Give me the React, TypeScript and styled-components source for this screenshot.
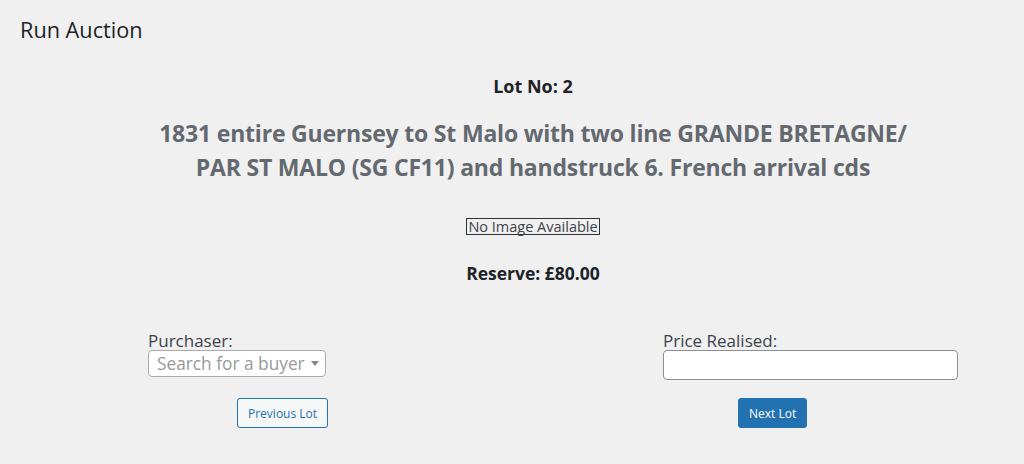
import React, {FC} from 'react';
import styled, {createGlobalStyle} from 'styled-components';

const GlobalStyle = createGlobalStyle`
  html, body {
    margin: 0;
    padding: 0;
    background: #f0f0f1;
    font-family: "Open Sans", "Noto Sans", sans-serif;
    color: #3c434a;
  }
`;

const App: FC = (): JSX.Element => {
    return (
        <>
            <GlobalStyle/>
            <Wrap>
                <PageTitle>Run Auction</PageTitle>
                <Lot>
                    <LotNo>Lot No: 2</LotNo>
                    <LotTitle>
                        1831 entire Guernsey to St Malo with two line GRANDE BRETAGNE/<br/>
                        PAR ST MALO (SG CF11) and handstruck 6. French arrival cds
                    </LotTitle>
                    <NoImage>No Image Available</NoImage>
                    <Reserve>Reserve: £80.00</Reserve>
                </Lot>
                <Form>
                    <Field>
                        <Label htmlFor="buyer">Purchaser:</Label>
                        <Select id="buyer">
                            <Placeholder>Search for a buyer</Placeholder>
                            <Arrow/>
                        </Select>
                    </Field>
                    <Field>
                        <Label htmlFor="price">Price Realised:</Label>
                        <Input id="price" type="text"/>
                    </Field>
                    <ButtonCell $offset={89}>
                        <Button>Previous Lot</Button>
                    </ButtonCell>
                    <ButtonCell $offset={75}>
                        <Button $primary>Next Lot</Button>
                    </ButtonCell>
                </Form>
            </Wrap>
        </>
    );
};

export default App;

const Wrap = styled.div`
  padding: 16px 0 0 20px;
`;

const PageTitle = styled.h1`
  margin: 0;
  font-size: 21.7px;
  font-weight: 400;
  line-height: 28px;
  color: #1d2327;
`;

const Lot = styled.div`
  padding-left: 22px;
  display: flex;
  flex-direction: column;
  align-items: center;
  text-align: center;
`;

const LotNo = styled.div`
  margin-top: 30px;
  font-size: 18px;
  font-weight: 700;
  line-height: 24px;
  color: #1d2327;
`;

const LotTitle = styled.h2`
  margin: 18px 0 0;
  font-size: 23px;
  font-weight: 700;
  line-height: 34px;
  letter-spacing: -0.2px;
  color: #646970;
`;

const NoImage = styled.div`
  margin-top: 34px;
  border: 1px solid #2c3338;
  padding: 0 1px;
  font-size: 14.5px;
  line-height: 15px;
  color: #3c434a;
`;

const Reserve = styled.div`
  margin-top: 26px;
  font-size: 17.5px;
  font-weight: 700;
  line-height: 24px;
  color: #1d2327;
`;

const Form = styled.div`
  margin-top: 47px;
  padding-left: 128px;
  display: grid;
  grid-template-columns: 515px 1fr;
  row-gap: 18px;
`;

const Field = styled.div`
  display: flex;
  flex-direction: column;
  align-items: flex-start;
`;

const Label = styled.label`
  font-size: 17px;
  line-height: 18px;
  color: #3c434a;
`;

const Select = styled.div`
  box-sizing: border-box;
  width: 178px;
  height: 27px;
  padding: 0 6px 0 8px;
  display: flex;
  align-items: center;
  justify-content: space-between;
  background: #fff;
  border: 1px solid #aaa;
  border-radius: 4px;
`;

const Placeholder = styled.span`
  font-size: 17.3px;
  color: #999;
`;

const Arrow = styled.span`
  width: 0;
  height: 0;
  border-left: 4px solid transparent;
  border-right: 4px solid transparent;
  border-top: 5px solid #888;
`;

const Input = styled.input`
  box-sizing: border-box;
  width: 295px;
  height: 30px;
  margin: 0;
  background: #fff;
  border: 1px solid #8c8f94;
  border-radius: 4px;
  outline: 0;
`;

const ButtonCell = styled.div<{$offset: number}>`
  padding-left: ${p => p.$offset}px;
`;

const Button = styled.button<{$primary?: boolean}>`
  height: 30px;
  padding: 0 10px;
  font-family: "Open Sans", "Noto Sans", sans-serif;
  font-size: 12px;
  border-radius: 3px;
  border: 1px solid #2271b1;
  background: ${p => (p.$primary ? '#2271b1' : '#f6f7f7')};
  color: ${p => (p.$primary ? '#fff' : '#2271b1')};
  cursor: pointer;
`;
